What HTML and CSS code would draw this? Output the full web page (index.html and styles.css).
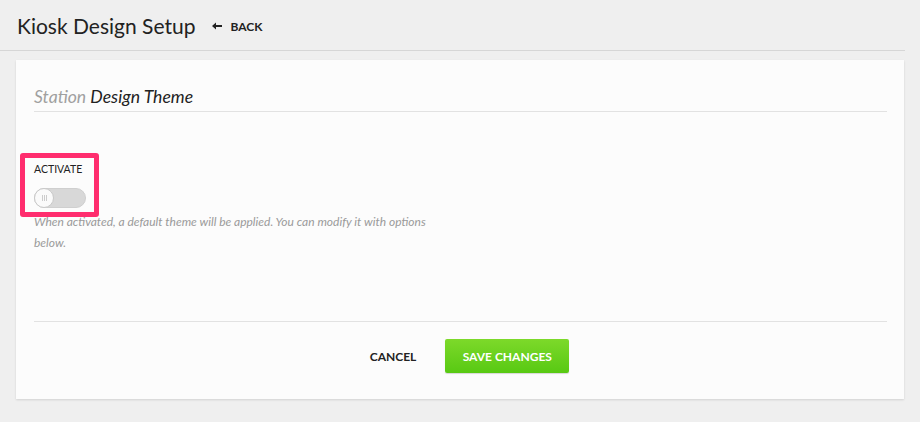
FILE: index.html
```html
<!DOCTYPE html>
<html>
<head>
<meta charset="utf-8">
<link rel="stylesheet" href="styles.css">
</head>
<body>
<header class="page-header">
  <h1 class="page-title">Kiosk Design Setup</h1>
  <a class="back-link" href="#">
    <svg class="back-icon" width="10" height="8" viewBox="0 0 10 8"><path d="M0 4 L4 0.5 L4 3 L10 3 L10 5 L4 5 L4 7.5 Z" fill="#222"/></svg>
    BACK
  </a>
</header>
<main class="card">
  <h2 class="section-title"><span class="muted">Station</span> Design Theme</h2>
  <div class="field">
    <div class="highlight"></div>
    <label class="field-label">ACTIVATE</label>
    <div class="toggle">
      <span class="knob"><span class="grip"></span></span>
    </div>
  </div>
  <p class="help">When activated, a default theme will be applied. You can modify it with options below.</p>
  <div class="actions">
    <button class="btn-cancel">CANCEL</button>
    <button class="btn-save">SAVE CHANGES</button>
  </div>
</main>
</body>
</html>
```

FILE: styles.css
```css
* { box-sizing: border-box; }
html, body { margin: 0; padding: 0; }
body {
  background: #efefef;
  font-family: "Lato", "Liberation Sans", sans-serif;
  color: #222;
  width: 920px;
  height: 422px;
  overflow: hidden;
}
.page-header {
  display: flex;
  align-items: center;
  width: 905px;
  height: 51px;
  padding-left: 17px;
  border-bottom: 1px solid #d6d6d6;
}
.page-title {
  margin: 0;
  font-size: 21px;
  font-weight: 400;
  color: #222;
}
.back-link {
  display: flex;
  align-items: center;
  gap: 8px;
  margin-left: 17px;
  font-size: 12px;
  font-weight: 700;
  color: #222;
  text-decoration: none;
  margin-top: 2px;
}
.card {
  margin: 9px 0 0 16px;
  width: 888px;
  height: 339px;
  background: #fcfcfc;
  box-shadow: 0 1px 2px rgba(0,0,0,0.12);
  padding: 27px 17px 0 18px;
  display: flex;
  flex-direction: column;
}
.section-title {
  margin: 0;
  font-size: 17.6px;
  font-style: italic;
  font-weight: 400;
  color: #222;
  padding-bottom: 4px;
  border-bottom: 1px solid #e2e2e2;
  line-height: 20px;
}
.muted { color: #a0a0a0; }
.field {
  position: relative;
  margin-top: 50px;
  display: flex;
  flex-direction: column;
}
.highlight {
  position: absolute;
  left: -14px;
  top: -9px;
  width: 79px;
  height: 64px;
  border: 5px solid #ff2d6e;
  border-radius: 3px;
}
.field-label {
  font-size: 10.5px;
  color: #222;
  line-height: 14px;
}
.toggle {
  margin-top: 12px;
  width: 52px;
  height: 20px;
  border-radius: 10px;
  background: #d8d8d8;
  border: 1px solid #cfcfcf;
  position: relative;
}
.knob {
  position: absolute;
  left: -1px;
  top: -1px;
  width: 20px;
  height: 20px;
  border-radius: 50%;
  background: #fafafa;
  border: 1px solid #c8c8c8;
  display: flex;
  align-items: center;
  justify-content: center;
}
.grip {
  width: 5px;
  height: 6px;
  border-left: 1px solid #ccc;
  border-right: 1px solid #ccc;
  background: linear-gradient(#ccc, #ccc) center / 1px 100% no-repeat;
}
.help {
  margin: 3px 0 0 0;
  width: 392px;
  font-size: 12px;
  font-style: italic;
  color: #9a9a9a;
  line-height: 21px;
}
.actions {
  margin-top: 68px;
  border-top: 1px solid #e2e2e2;
  display: flex;
  justify-content: center;
  align-items: center;
  padding-top: 17px;
  padding-left: 16px;
  gap: 29px;
}
button {
  font-family: "Lato", "Liberation Sans", sans-serif;
  cursor: pointer;
}
.btn-cancel {
  background: none;
  border: none;
  padding: 0;
  font-size: 12px;
  font-weight: 700;
  color: #222;
  margin-left: 2px;
}
.btn-save {
  width: 124px;
  height: 34px;
  border: none;
  border-radius: 2px;
  background: linear-gradient(#7dd92a, #58c913);
  color: #fff;
  font-size: 12px;
  font-weight: 700;
  box-shadow: 0 1px 1px rgba(0,0,0,0.15);
}
```
